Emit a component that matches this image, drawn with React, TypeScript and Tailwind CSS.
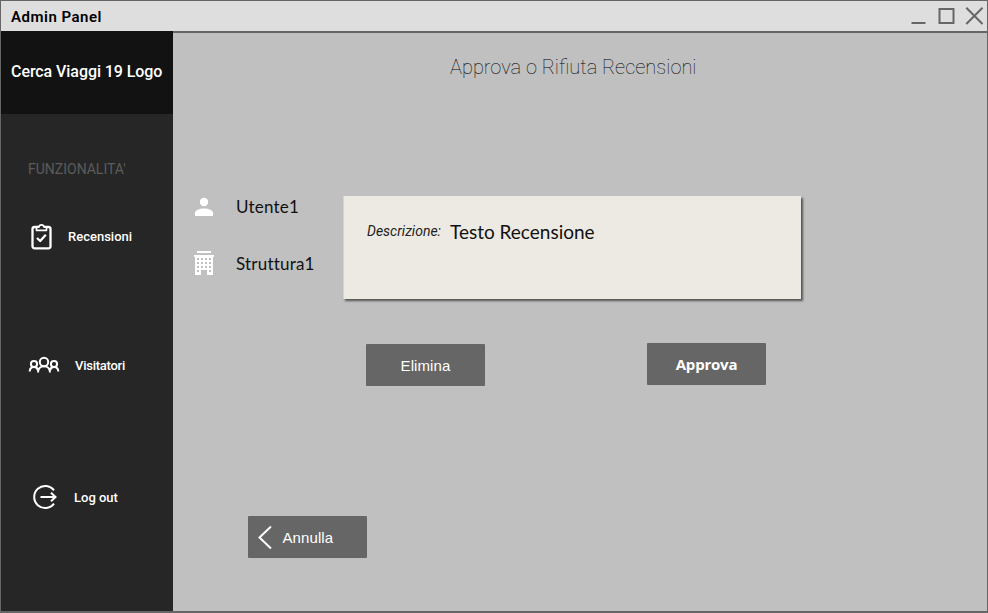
import React from "react";

function WindowControls() {
  return (
    <svg width="80" height="28" viewBox="908 2 80 28" fill="none" stroke="#666" strokeWidth="2">
      <path d="M911.5 23H925.5" />
      <rect x="939.5" y="9" width="14" height="14" />
      <path d="M966.3 7.8L982.5 24M982.5 7.8L966.3 24" />
    </svg>
  );
}

function ClipboardIcon() {
  return (
    <svg width="22" height="28" viewBox="0 0 22 28" fill="none" stroke="#fff" strokeWidth="2.3" strokeLinejoin="round">
      <rect x="2.5" y="5" width="18" height="21.3" rx="2" />
      <path d="M6.5 8.3V5.2H8.9C9.3 2.2 13.7 2.2 14.1 5.2H16.5V8.3Z" strokeWidth="1.7" fill="#262626" />
      <path d="M7 16L10.2 19L15.8 12.8" />
    </svg>
  );
}

function VisitorsIcon() {
  return (
    <svg width="32" height="18" viewBox="0 0 32 18" fill="none" stroke="#fff" strokeWidth="2">
      <circle cx="16" cy="6" r="4.2" />
      <circle cx="6" cy="8" r="3.1" />
      <circle cx="26" cy="8" r="3.1" />
      <path d="M10 16.5C10.2 8.2 21.8 8.2 22 16.5M1.7 15.5C2 9.8 9.3 9.8 10 14.5M22 14.5C22.7 9.8 30 9.8 30.3 15.5" />
    </svg>
  );
}

function LogoutIcon() {
  return (
    <svg width="26" height="26" viewBox="0 0 26 26" fill="none" stroke="#fff" strokeWidth="2">
      <path d="M22 6.4A11 11 0 1 0 22 19.6" />
      <path d="M8.5 13H23.5M19 8.7L23.5 13L19 17.3" />
    </svg>
  );
}

function PersonIcon() {
  return (
    <svg width="20" height="20" viewBox="0 0 20 20" fill="#fff">
      <circle cx="10" cy="5" r="4.2" />
      <path d="M1 19V16C1 10 19 10 19 16V19Z" />
    </svg>
  );
}

function BuildingIcon() {
  const cols = [3, 7, 11, 15];
  const rows = [7, 11, 15];
  return (
    <svg width="20" height="25" viewBox="0 0 20 25" fill="#fff" className="-mt-[2px]">
      <path d="M3 0H17V2H3ZM0 4H20V6H19V24H13V19H7V24H1V6H0Z" />
      <g fill="#c0c0c0">
        {rows.map((y) => cols.map((x) => <rect key={`${x}-${y}`} x={x} y={y} width="2" height="2" />))}
        <rect x="3" y="19" width="2" height="2" />
        <rect x="15" y="19" width="2" height="2" />
      </g>
    </svg>
  );
}

export default function App() {
  return (
    <div className="flex h-[613px] w-[988px] flex-col overflow-hidden border border-b-2 border-[#666] bg-[#c0c0c0] font-['Roboto',sans-serif] whitespace-nowrap">
      <header className="flex h-[30px] shrink-0 items-center justify-between bg-[#dedede] pl-[10px]">
        <h1 className="pt-[2px] text-[15px] font-semibold tracking-[0.5px] text-black">Admin Panel</h1>
        <div className="-mr-px">
          <WindowControls />
        </div>
      </header>
      <div className="flex min-h-0 flex-1">
        <aside className="-ml-px w-[173px] shrink-0 border-l border-[#161616] bg-[#262626] text-white">
          <div className="-ml-px flex h-[83px] items-center bg-[#121212] pb-[2px] pl-[11px]">
            <span className="text-[16px] font-medium tracking-[-0.07px]">Cerca Viaggi 19 Logo</span>
          </div>
          <div className="pt-[45px] pl-[27px] text-[14px] leading-5 text-[#5c5c5c]">FUNZIONALITA'</div>
          <nav className="text-[13px] font-medium">
            <a className="mt-[43px] flex h-7 items-center pl-[29px]">
              <ClipboardIcon />
              <span className="ml-4 pt-px">Recensioni</span>
            </a>
            <a className="mt-[101px] flex h-7 items-center pl-[27px]">
              <VisitorsIcon />
              <span className="ml-[15px] pt-px tracking-[-0.25px]">Visitatori</span>
            </a>
            <a className="mt-[104px] flex h-7 items-center pl-[31px]">
              <LogoutIcon />
              <span className="ml-4 pt-px">Log out</span>
            </a>
          </nav>
        </aside>
        <main className="flex-1 border-t-2 border-[#666]">
          <h2 className="mt-[20px] pl-[277px] text-[20px] leading-7 font-thin text-black">Approva o Rifiuta Recensioni</h2>
          <section className="mt-[115px] flex h-[103px]">
            <div className="w-[171px] pl-[21px] font-['Lato',sans-serif] text-[17px] tracking-[0.2px] text-[#111] [font-variant-ligatures:none]">
              <div className="flex h-[22px] items-center">
                <PersonIcon />
                <span className="ml-[22px] pb-px">Utente1</span>
              </div>
              <div className="mt-[34px] flex h-[25px] items-center">
                <BuildingIcon />
                <span className="ml-[22px] pb-px">Struttura1</span>
              </div>
            </div>
            <article className="-ml-px flex w-[458px] border-l border-[#d6d4d0] bg-[#edeae3] pt-[23px] pl-[23px] text-black shadow-[2px_2px_2px_#555]">
              <span className="text-[14px] leading-6 text-[#222] italic">Descrizione:</span>
              <p className="ml-[9px] font-['Lato',sans-serif] text-[19px] leading-[25px] text-[#111]">Testo Recensione</p>
            </article>
          </section>
          <div className="mt-[44px] flex pl-[193px] text-[15px] text-white">
            <button className="mt-px h-[42px] w-[119px] rounded-[1px] bg-[#666] pt-[2px] font-['Liberation_Sans',Arial,sans-serif] tracking-[0.1px]">Elimina</button>
            <button className="ml-[162px] h-[42px] w-[119px] rounded-[1px] bg-[#666] font-['Open_Sans',sans-serif] font-bold tracking-[-0.2px]">Approva</button>
          </div>
          <button className="mt-[130px] ml-[75px] flex h-[42px] w-[119px] items-center rounded-[1px] bg-[#666] pl-[10px] font-['Liberation_Sans',Arial,sans-serif] text-[15px] text-white">
            <svg width="14" height="24" viewBox="0 0 14 24" fill="none" stroke="#fff" strokeWidth="2">
              <path d="M13 1.5L1.5 12.5L13 23.5" />
            </svg>
            <span className="ml-[10.5px] pt-[2px] tracking-[0.1px]">Annulla</span>
          </button>
        </main>
      </div>
    </div>
  );
}
